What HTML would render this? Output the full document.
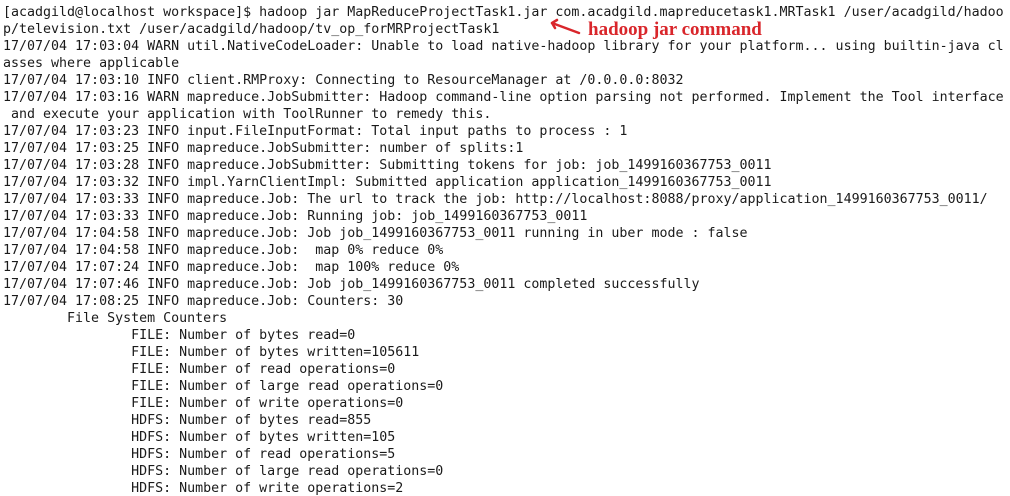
<!DOCTYPE html>
<html><head><style>
html,body{margin:0;padding:0;background:#fff;width:1010px;height:496px;overflow:hidden}
pre{margin:0;padding:4px 0 0 3px;font-family:"DejaVu Sans Mono","Liberation Mono",monospace;font-size:13.3px;line-height:17px;color:#1a1a1a;white-space:pre}
.ann{position:absolute;left:588px;top:19px;font-family:"Liberation Serif",serif;font-weight:bold;font-size:19px;color:#d9262b}
svg{position:absolute;left:0;top:0}
</style></head><body>
<pre>[acadgild@localhost workspace]$ hadoop jar MapReduceProjectTask1.jar com.acadgild.mapreducetask1.MRTask1 /user/acadgild/hadoo
p/television.txt /user/acadgild/hadoop/tv_op_forMRProjectTask1
17/07/04 17:03:04 WARN util.NativeCodeLoader: Unable to load native-hadoop library for your platform... using builtin-java cl
asses where applicable
17/07/04 17:03:10 INFO client.RMProxy: Connecting to ResourceManager at /0.0.0.0:8032
17/07/04 17:03:16 WARN mapreduce.JobSubmitter: Hadoop command-line option parsing not performed. Implement the Tool interface
 and execute your application with ToolRunner to remedy this.
17/07/04 17:03:23 INFO input.FileInputFormat: Total input paths to process : 1
17/07/04 17:03:25 INFO mapreduce.JobSubmitter: number of splits:1
17/07/04 17:03:28 INFO mapreduce.JobSubmitter: Submitting tokens for job: job_1499160367753_0011
17/07/04 17:03:32 INFO impl.YarnClientImpl: Submitted application application_1499160367753_0011
17/07/04 17:03:33 INFO mapreduce.Job: The url to track the job: http://localhost:8088/proxy/application_1499160367753_0011/
17/07/04 17:03:33 INFO mapreduce.Job: Running job: job_1499160367753_0011
17/07/04 17:04:58 INFO mapreduce.Job: Job job_1499160367753_0011 running in uber mode : false
17/07/04 17:04:58 INFO mapreduce.Job:  map 0% reduce 0%
17/07/04 17:07:24 INFO mapreduce.Job:  map 100% reduce 0%
17/07/04 17:07:46 INFO mapreduce.Job: Job job_1499160367753_0011 completed successfully
17/07/04 17:08:25 INFO mapreduce.Job: Counters: 30
        File System Counters
                FILE: Number of bytes read=0
                FILE: Number of bytes written=105611
                FILE: Number of read operations=0
                FILE: Number of large read operations=0
                FILE: Number of write operations=0
                HDFS: Number of bytes read=855
                HDFS: Number of bytes written=105
                HDFS: Number of read operations=5
                HDFS: Number of large read operations=0
                HDFS: Number of write operations=2</pre>
<svg width="1010" height="496"><path d="M579 33 L552 23 M552 23 L557 20 M552 23 L555 28" stroke="#d9262b" stroke-width="2.5" fill="none" stroke-linecap="round"/></svg>
<div class="ann">hadoop jar command</div>
</body></html>
